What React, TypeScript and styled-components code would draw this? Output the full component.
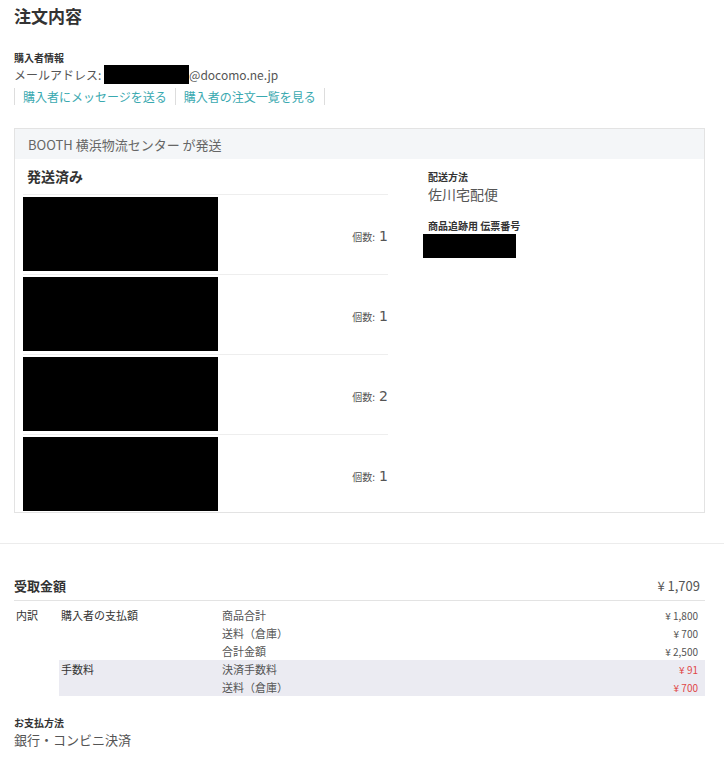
import React from "react";
import styled, { createGlobalStyle } from "styled-components";

const Global = createGlobalStyle`
  html, body { margin: 0; padding: 0; background: #fff; }
  body {
    font-family: "Noto Sans CJK JP", "Noto Sans", sans-serif;
    color: #444;
  }
`;

const Page = styled.div`
  padding: 0 19px 0 14px;
`;

const Title = styled.h1`
  margin: 0;
  padding-top: 4px;
  font-size: 17px;
  line-height: 24px;
  font-weight: 700;
  color: #333;
`;

const Section = styled.section<{ $mt: number }>`
  margin-top: ${(p) => p.$mt}px;
`;

const Label = styled.div`
  font-size: 10px;
  line-height: 14px;
  font-weight: 700;
  color: #333;
`;

const BodyText = styled.div<{ $size?: number }>`
  font-size: ${(p) => p.$size ?? 13}px;
  line-height: 19px;
  color: #555;
  display: flex;
  align-items: center;
`;

const Redact = styled.span<{ $w: number; $h: number }>`
  display: inline-block;
  width: ${(p) => p.$w}px;
  height: ${(p) => p.$h}px;
  background: #000;
`;

const Links = styled.div`
  display: flex;
  margin-top: 4px;
  border-left: 1px solid #ddd;
`;

const LinkItem = styled.a`
  font-size: 12px;
  line-height: 17px;
  color: #3aa9b0;
  text-decoration: none;
  padding: 0 8px;
  border-right: 1px solid #ddd;
`;

const ShipBox = styled.div`
  margin-top: 23px;
  border: 1px solid #e3e3e3;
`;

const ShipHeader = styled.div`
  background: #f4f6f8;
  height: 30px;
  padding-left: 13px;
  display: flex;
  align-items: center;
  font-size: 13px;
  color: #666;
`;

const ShipBody = styled.div`
  display: flex;
  padding: 0 0 0 8px;
`;

const ItemsCol = styled.div`
  width: 365px;
`;

const StatusTitle = styled.div`
  font-size: 14px;
  font-weight: 700;
  color: #333;
  line-height: 20px;
  padding: 7px 0 8px 4px;
`;

const ItemRow = styled.div`
  display: flex;
  align-items: center;
  justify-content: space-between;
  border-top: 1px solid #eeeeee;
  padding: 2px 0 3px;
  &:last-child {
    padding-bottom: 1px;
  }
`;

const Thumb = styled.div`
  width: 195px;
  height: 74px;
  background: #000;
`;

const Qty = styled.div`
  display: flex;
  align-items: baseline;
  gap: 4px;
  margin-top: 4px;
  color: #555;
`;

const QtyLabel = styled.span`
  font-size: 10px;
`;

const QtyNum = styled.span`
  font-family: "DejaVu Sans", sans-serif;
  font-size: 14px;
  color: #555;
`;

const InfoCol = styled.div`
  margin-left: 40px;
  padding-top: 11px;
  display: flex;
  flex-direction: column;
`;

const InfoBlock = styled.div<{ $mt?: number }>`
  margin-top: ${(p) => p.$mt ?? 0}px;
`;

const InfoValue = styled.div`
  font-size: 14px;
  line-height: 20px;
  color: #555;
`;

const TrackRedact = styled.div`
  width: 93px;
  height: 24px;
  background: #000;
  margin-left: -5px;
  margin-top: 1px;
`;

const Divider = styled.hr`
  margin: 30px 0 0;
  border: 0;
  border-top: 1px solid #ececec;
`;

const Summary = styled.div`
  padding: 0 19px 0 14px;
`;

const SumHeader = styled.div`
  margin-top: 32px;
  display: flex;
  justify-content: space-between;
  align-items: center;
  height: 19px;
  padding: 0 5px 5px 0;
  border-bottom: 1px solid #e3e3e3;
  font-size: 13px;
  color: #333;
`;

const SumTitle = styled.span`
  font-weight: 700;
`;

const SumTotal = styled.span`
  color: #555;
`;

const Breakdown = styled.div`
  display: grid;
  grid-template-columns: 45px 1fr;
  margin-top: 5px;
  font-size: 11px;
  color: #444;
`;

const BreakLabel = styled.div`
  color: #333;
  padding-left: 2px;
  line-height: 18px;
`;

const Group = styled.div<{ $shade?: boolean }>`
  grid-column: 2;
  display: grid;
  grid-template-columns: 163px 1fr;
  background: ${(p) => (p.$shade ? "#ebebf2" : "transparent")};
`;

const GroupName = styled.div`
  padding-left: 2px;
  line-height: 18px;
  color: #333;
`;

const Lines = styled.div`
  display: flex;
  flex-direction: column;
`;

const Line = styled.div<{ $red?: boolean }>`
  display: flex;
  justify-content: space-between;
  height: 18px;
  align-items: center;
  padding-right: 7px;
  color: #555;
  & > span:last-child {
    color: ${(p) => (p.$red ? "#e04848" : "#555")};
    font-size: 10px;
  }
`;

const Payment = styled.div`
  padding: 20px 19px 20px 14px;
`;

type L = { label: string; amount: string; red?: boolean };

const groups: { name: string; shade?: boolean; lines: L[] }[] = [
  {
    name: "購入者の支払額",
    lines: [
      { label: "商品合計", amount: "¥ 1,800" },
      { label: "送料（倉庫）", amount: "¥ 700" },
      { label: "合計金額", amount: "¥ 2,500" },
    ],
  },
  {
    name: "手数料",
    shade: true,
    lines: [
      { label: "決済手数料", amount: "¥ 91", red: true },
      { label: "送料（倉庫）", amount: "¥ 700", red: true },
    ],
  },
];

const items = [1, 1, 2, 1];

export default function App() {
  return (
    <>
      <Global />
      <Page>
        <Title>注文内容</Title>
        <Section $mt={23}>
          <Label>購入者情報</Label>
          <BodyText $size={12}>
            メールアドレス:&nbsp;
            <Redact $w={85} $h={19} />
            @docomo.ne.jp
          </BodyText>
          <Links>
            <LinkItem href="#">購入者にメッセージを送る</LinkItem>
            <LinkItem href="#">購入者の注文一覧を見る</LinkItem>
          </Links>
        </Section>
        <ShipBox>
          <ShipHeader>BOOTH 横浜物流センター が発送</ShipHeader>
          <ShipBody>
            <ItemsCol>
              <StatusTitle>発送済み</StatusTitle>
              {items.map((q, i) => (
                <ItemRow key={i}>
                  <Thumb />
                  <Qty>
                    <QtyLabel>個数:</QtyLabel>
                    <QtyNum>{q}</QtyNum>
                  </Qty>
                </ItemRow>
              ))}
            </ItemsCol>
            <InfoCol>
              <InfoBlock>
                <Label>配送方法</Label>
                <InfoValue>佐川宅配便</InfoValue>
              </InfoBlock>
              <InfoBlock $mt={15}>
                <Label>商品追跡用 伝票番号</Label>
                <TrackRedact />
              </InfoBlock>
            </InfoCol>
          </ShipBody>
        </ShipBox>
      </Page>
      <Divider />
      <Summary>
        <SumHeader>
          <SumTitle>受取金額</SumTitle>
          <SumTotal>¥ 1,709</SumTotal>
        </SumHeader>
        <Breakdown>
          <BreakLabel>内訳</BreakLabel>
          {groups.map((g) => (
            <Group key={g.name} $shade={g.shade}>
              <GroupName>{g.name}</GroupName>
              <Lines>
                {g.lines.map((l) => (
                  <Line key={l.label} $red={l.red}>
                    <span>{l.label}</span>
                    <span>{l.amount}</span>
                  </Line>
                ))}
              </Lines>
            </Group>
          ))}
        </Breakdown>
      </Summary>
      <Payment>
        <Label>お支払方法</Label>
        <BodyText>銀行・コンビニ決済</BodyText>
      </Payment>
    </>
  );
}
